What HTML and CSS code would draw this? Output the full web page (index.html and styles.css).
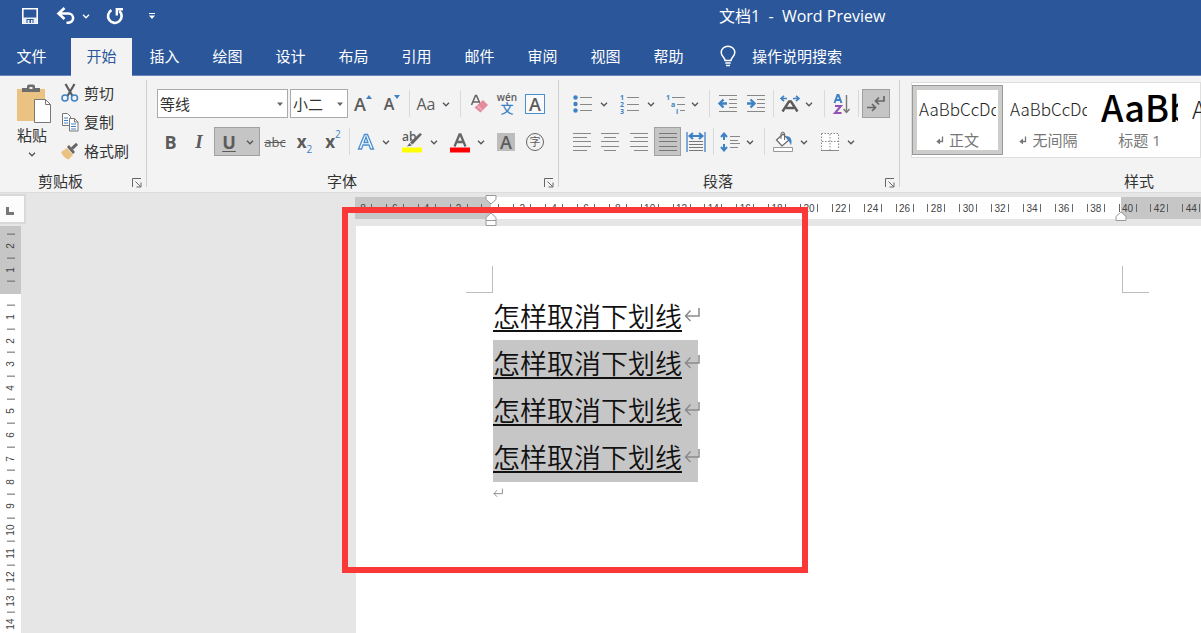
FILE: index.html
```html
<!DOCTYPE html>
<html lang="zh-CN">
<head>
<meta charset="utf-8">
<title>文档1 - Word Preview</title>
<link rel="stylesheet" href="styles.css">
</head>
<body>
<svg class="defs" aria-hidden="true">
  <symbol id="chev" viewBox="0 0 12 12"><path d="M3 4.800l3 3 3-3" fill="none" stroke="currentColor" stroke-width="1.300"/></symbol>
  <symbol id="caret" viewBox="0 0 12 12"><path d="M3 4.500h6L6 8z" fill="#666"/></symbol>
  <symbol id="launch" viewBox="0 0 10 10"><path d="M.5 9V.5H9M3.500 3.500l5 5M9 4.500V9H4.500" fill="none" stroke="#666"/></symbol>
  <symbol id="ret" viewBox="0 0 16 16"><path d="M15 1v8H1.500M6.500 3.500L1.500 9l5 5" fill="none" stroke="#8a8a8a" stroke-width="1.500"/></symbol>
  <symbol id="ret-fill" viewBox="0 0 8 8"><path d="M6.500 .5v5H3" fill="none" stroke="#777" stroke-width="1.300"/><path d="M4 2.500v6L.3 5.500z" fill="#777"/></symbol>
</svg>

<header class="titlebar">
  <div class="quick">
    <button aria-label="保存"><svg width="18" height="18" viewBox="0 0 18 18"><path d="M1.800 1.800h14.400v14.400H1.800z" fill="none" stroke="#fff" stroke-width="1.600"/><path d="M2 10.500h14v6H2z" fill="#e8eef8"/><path d="M5.500 12h7v4h-7z" fill="#2b579a"/><path d="M6.500 13h2v4h-2zM10 13h1.500v4H10z" fill="#e8eef8"/></svg></button>
    <button class="undo" aria-label="撤消"><svg width="20" height="18" viewBox="0 0 20 18"><path d="M2.500 6.500h10a4.600 4.600 0 0 1 0 9.200h-2M8.500 1L2.500 6.500l6 5.500" fill="none" stroke="#fff" stroke-width="2.600"/></svg><svg class="chev" width="12" height="12"><use href="#chev"/></svg></button>
    <button aria-label="重复"><svg width="18" height="18" viewBox="0 0 18 18"><path d="M5.500 3.200A6.800 6.800 0 1 0 13.300 4" fill="none" stroke="#fff" stroke-width="2.600"/><path d="M10.800 8.500V2.200H17" fill="none" stroke="#fff" stroke-width="2.400"/></svg></button>
    <button class="more" aria-label="自定义快速访问工具栏"><svg width="8" height="8" viewBox="0 0 8 8"><path d="M1 1.500h6" stroke="#fff"/><path d="M1 3.500h6L4 7z" fill="#fff"/></svg></button>
  </div>
  <h1>文档1 &nbsp;- &nbsp;Word Preview</h1>
</header>

<nav class="tabs">
  <button class="file">文件</button>
  <button class="active">开始</button>
  <button>插入</button>
  <button>绘图</button>
  <button>设计</button>
  <button>布局</button>
  <button>引用</button>
  <button>邮件</button>
  <button>审阅</button>
  <button>视图</button>
  <button>帮助</button>
  <button class="tell"><svg width="16" height="22" viewBox="0 0 16 22"><path d="M5 15.500c0-3-3.800-4.200-3.800-8a6.800 6.300 0 0 1 13.600 0c0 3.800-3.800 5-3.800 8zM5.300 18h5.400M6 20.500h4" fill="none" stroke="#fff" stroke-width="1.500"/></svg>操作说明搜索</button>
</nav>

<section class="ribbon">
  <div class="group clipboard">
    <div class="clip">
      <button class="paste">
        <svg width="36" height="40" viewBox="0 0 36 40"><path d="M3 5h28v32H3z" fill="#eac282"/><path d="M8 8V4h5V2.500a2 2 0 0 1 2-2h4a2 2 0 0 1 2 2V4h5v4z" fill="#6d6d6d"/><path d="M15.500 3h3v2h-3z" fill="#f3f3f3"/><path d="M20.500 15.500h11l5 5V38.500h-16z" fill="#fff" stroke="#777"/><path d="M31.500 15.500v5h5" fill="none" stroke="#777"/></svg>
        <span>粘贴</span>
        <svg class="chev" width="12" height="12"><use href="#chev"/></svg>
      </button>
      <div class="clip-list">
        <button><svg width="18" height="20" viewBox="0 0 18 20"><path d="M4.500 1l7 12M13.500 1l-7 12" stroke="#5b5b5b" stroke-width="2.200"/><circle cx="4" cy="15" r="3" fill="none" stroke="#3f82c4" stroke-width="1.500"/><circle cx="13.500" cy="15" r="3" fill="none" stroke="#3f82c4" stroke-width="1.500"/></svg>剪切</button>
        <button><svg width="18" height="20" viewBox="0 0 18 20"><path d="M1.500 1.500h5l3 3v9h-8z" fill="#fff" stroke="#777"/><path d="M3 6h4M3 8.500h4M3 11h4" stroke="#3f82c4"/><path d="M8.500 6.500h5l3.500 3.500v9H8.500z" fill="#fff" stroke="#777"/><path d="M13.500 6.500V10H17" fill="none" stroke="#777"/><path d="M10 12h5M10 14.500h5M10 17h5" stroke="#3f82c4"/></svg>复制</button>
        <button><svg width="18" height="20" viewBox="0 0 18 20"><path d="M0 11l6-4 6 7-4.500 4.500C4 17.500 1.500 14.500 0 11z" fill="#eac282"/><path d="M6 6l2-2 6 7-2 2z" fill="#666"/><path d="M10 6.500L15 1.800l2 2.200-5 4.800z" fill="#666"/></svg>格式刷</button>
      </div>
    </div>
    <footer><span>剪贴板</span><button class="launch" aria-label="剪贴板设置"><svg width="10" height="10"><use href="#launch"/></svg></button></footer>
  </div>

  <div class="group font">
    <div class="row font-a">
      <label class="pick"><select aria-label="字体"><option>等线</option></select><svg width="12" height="12"><use href="#caret"/></svg></label>
      <label class="pick"><select aria-label="字号"><option>小二</option></select><svg width="12" height="12"><use href="#caret"/></svg></label>
      <button class="grow" aria-label="增大字号"><span class="t18">A</span><svg width="6" height="18" viewBox="0 0 6 18"><path d="M0 4h6L3 0z" fill="#3f82c4"/></svg></button>
      <button class="grow" aria-label="减小字号"><span class="t16">A</span><svg width="6" height="18" viewBox="0 0 6 18"><path d="M0 0h6L3 4z" fill="#3f82c4"/></svg></button>
      <i class="sep"></i>
      <button class="split" aria-label="更改大小写"><span class="t16">Aa</span><svg class="chev" width="12" height="12"><use href="#chev"/></svg></button>
      <i class="sep"></i>
      <button aria-label="清除格式"><svg width="18" height="20" viewBox="0 0 18 20"><path d="M1.500 11L5.500 1.500h1L10 9.500M3 8h6" fill="none" stroke="#666" stroke-width="1.600"/><path d="M13 6l5 5-7.500 7.500-6-5z" fill="#e58b9d"/><path d="M7 11.500l5.500 5" stroke="#f6d0d7" stroke-width="1"/></svg></button>
      <button class="pinyin" aria-label="拼音指南"><span>wén</span><b>文</b></button>
      <button aria-label="字符边框"><span class="boxed">A</span></button>
    </div>
    <div class="row font-b">
      <button class="heavy">B</button>
      <button class="ital">I</button>
      <button class="split on heavy" aria-label="下划线"><span class="under">U</span><svg class="chev" width="12" height="12"><use href="#chev"/></svg></button>
      <button class="strike">abc</button>
      <button class="script">x<sub>2</sub></button>
      <button class="script">x<sup>2</sup></button>
      <i class="sep"></i>
      <button class="split" aria-label="文本效果"><svg width="18" height="20" viewBox="0 0 18 20"><path d="M1.500 17L7.500 2.500h3l6 14.500h-3l-1.500-4H6l-1.500 4zM7 10.500h4L9 5z" fill="#f8fbff" stroke="#4a90d0" stroke-width="1.300"/></svg><svg class="chev" width="12" height="12"><use href="#chev"/></svg></button>
      <button class="split" aria-label="突出显示"><svg width="20" height="22" viewBox="0 0 20 22"><text x="0" y="10" class="ink-label">ab</text><path d="M20 3.500L10.500 13.500l-2.500-2L18 2z" fill="#666"/><path d="M7.500 12l2.500 2.500-5 1z" fill="#666"/><path d="M0 16.500h20v5H0z" fill="#ff0"/></svg><svg class="chev" width="12" height="12"><use href="#chev"/></svg></button>
      <button class="split" aria-label="字体颜色"><svg width="20" height="22" viewBox="0 0 20 22"><path d="M4.500 15.500L9.500 3.500h1l5 12M6.500 11h7" fill="none" stroke="#666" stroke-width="2.300"/><path d="M0 16.500h20v5H0z" fill="#f00"/></svg><svg class="chev" width="12" height="12"><use href="#chev"/></svg></button>
      <button aria-label="字符底纹"><span class="shaded">A</span></button>
      <button aria-label="带圈字符"><span class="ringed">字</span></button>
    </div>
    <footer><span>字体</span><button class="launch" aria-label="字体设置"><svg width="10" height="10"><use href="#launch"/></svg></button></footer>
  </div>

  <div class="group para">
    <div class="row para-a">
      <button class="split" aria-label="项目符号"><svg width="20" height="20" viewBox="0 0 20 20"><path d="M7 3.500h12M7 10.500h12M7 16.500h12" stroke="#888"/><g fill="#3f82c4"><circle cx="2.500" cy="3.500" r="2.200"/><circle cx="2.500" cy="10" r="2.200"/><circle cx="2.500" cy="16.500" r="2.200"/></g></svg><svg class="chev" width="12" height="12"><use href="#chev"/></svg></button>
      <button class="split" aria-label="编号"><svg width="20" height="20" viewBox="0 0 20 20"><path d="M7 3.500h12M7 10.500h12M7 16.500h12" stroke="#888"/><g class="mini"><text x="0" y="6">1</text><text x="0" y="13">2</text><text x="0" y="20">3</text></g></svg><svg class="chev" width="12" height="12"><use href="#chev"/></svg></button>
      <button class="split" aria-label="多级列表"><svg width="20" height="20" viewBox="0 0 20 20"><path d="M7 3.500h13M12 10.500h8M15 16.500h5" stroke="#888"/><g class="mini"><text x="1" y="6">1</text><text x="6" y="13">a</text><text x="11" y="20">i</text></g></svg><svg class="chev" width="12" height="12"><use href="#chev"/></svg></button>
      <i class="sep"></i>
      <button aria-label="减少缩进"><svg width="20" height="20" viewBox="0 0 20 20"><path d="M1 1.500h18M11 5.500h8M11 9.500h8M11 13.500h8M1 17.500h18" stroke="#888"/><path d="M2 9.500h7M5.500 5.500l-4 4 4 4" fill="none" stroke="#3f82c4" stroke-width="2.400"/></svg></button>
      <button aria-label="增加缩进"><svg width="20" height="20" viewBox="0 0 20 20"><path d="M1 1.500h18M11 5.500h8M11 9.500h8M11 13.500h8M1 17.500h18" stroke="#888"/><path d="M1 9.500h7M4.500 5.500l4 4-4 4" fill="none" stroke="#3f82c4" stroke-width="2.400"/></svg></button>
      <i class="sep"></i>
      <button class="split" aria-label="中文版式"><svg width="20" height="18" viewBox="0 0 20 18"><path d="M2.500 16.500L9 6.500h2l6.500 10M6 13h8" fill="none" stroke="#5b5b5b" stroke-width="2.400"/><path d="M1 3.500h6M4 .8L1 3.500l3 2.700M19 3.500h-6M16 .8l3 2.700-3 2.700" fill="none" stroke="#3f82c4" stroke-width="1.600"/></svg><svg class="chev" width="12" height="12"><use href="#chev"/></svg></button>
      <i class="sep"></i>
      <button aria-label="排序"><svg width="18" height="22" viewBox="0 0 18 22"><path d="M1.500 10L4.500 2h1l3 8M3 7h4.500" fill="none" stroke="#3f82c4" stroke-width="2"/><path d="M2 13h6l-6 7h6.500" fill="none" stroke="#9350b8" stroke-width="2"/><path d="M13.500 2v17M10.500 16l3 3.500 3-3.500" fill="none" stroke="#777" stroke-width="1.400"/></svg></button>
      <i class="sep"></i>
      <button class="on" aria-label="显示编辑标记"><svg width="18" height="18" viewBox="0 0 18 18"><path d="M17 1v5H9M12 2.500L8.500 6l3.500 3.500M0 12.500h8M5 9L8.500 12.500 5 16" fill="none" stroke="#666" stroke-width="1.700"/></svg></button>
    </div>
    <div class="row para-b">
      <button aria-label="左对齐"><svg width="18" height="20" viewBox="0 0 18 20"><path d="M0 1.500h18M0 5.500h14M0 9.500h18M0 14.500h18M0 18.500h14" stroke="#888"/></svg></button>
      <button aria-label="居中"><svg width="18" height="20" viewBox="0 0 18 20"><path d="M0 1.500h18M3 5.500h12M0 9.500h18M0 14.500h18M3 18.500h12" stroke="#888"/></svg></button>
      <button aria-label="右对齐"><svg width="18" height="20" viewBox="0 0 18 20"><path d="M0 1.500h18M4 5.500h14M0 9.500h18M0 14.500h18M4 18.500h14" stroke="#888"/></svg></button>
      <button class="on" aria-label="两端对齐"><svg width="18" height="20" viewBox="0 0 18 20"><path d="M0 1.500h18M0 5.500h18M0 9.500h18M0 14.500h18M0 18.500h18" stroke="#777"/></svg></button>
      <button aria-label="分散对齐"><svg width="20" height="20" viewBox="0 0 20 20"><path d="M1 0v20M19 0v20" stroke="#3f82c4" stroke-width="1.300"/><path d="M3.500 4h13M7 1L3.500 4 7 7M13 1l3.500 3L13 7" fill="none" stroke="#3f82c4" stroke-width="2"/><path d="M3 9.500h14M3 12.500h14M3 15.500h14M3 18.500h14" stroke="#777"/></svg></button>
      <i class="sep"></i>
      <button class="split" aria-label="行距"><svg width="20" height="20" viewBox="0 0 20 20"><path d="M4 2v6M1 5l3-3.500L7 5M4 12v6M1 15l3 3.500L7 15" fill="none" stroke="#3f82c4" stroke-width="2"/><path d="M10 4.500h10M10 8.500h8M10 11.500h10M10 15.500h8" stroke="#888"/></svg><svg class="chev" width="12" height="12"><use href="#chev"/></svg></button>
      <i class="sep"></i>
      <button class="split" aria-label="底纹"><svg width="20" height="20" viewBox="0 0 20 20"><path d="M.5 15.500h19v4H.5z" fill="#fff" stroke="#999"/><path d="M3.500 8L10 2l6 6-7 6z" fill="#fff" stroke="#666" stroke-width="1.200"/><path d="M8 7V2a1.800 1.800 0 0 1 3.600 0v6" fill="none" stroke="#666"/><path d="M13 4c5 0 6.500 4 5 9.500-1-2.500-1.500-4-3-5z" fill="#3f82c4"/></svg><svg class="chev" width="12" height="12"><use href="#chev"/></svg></button>
      <button class="split" aria-label="边框"><svg width="18" height="20" viewBox="0 0 18 20"><path d="M0 1h18v18H0z" fill="#fff"/><path d="M.5 1.500h17v16M.5 1.500v16M9 2v16M1 9.500h16" fill="none" stroke="#888" stroke-dasharray="1.500 1.500"/><path d="M0 18.500h18" stroke="#888"/></svg><svg class="chev" width="12" height="12"><use href="#chev"/></svg></button>
    </div>
    <footer><span>段落</span><button class="launch" aria-label="段落设置"><svg width="10" height="10"><use href="#launch"/></svg></button></footer>
  </div>

  <div class="group styles">
    <div class="gallery">
      <button class="style chosen"><span class="sample">AaBbCcDd</span><span class="name"><svg width="8" height="8"><use href="#ret-fill"/></svg>正文</span></button>
      <button class="style"><span class="sample">AaBbCcDd</span><span class="name"><svg width="8" height="8"><use href="#ret-fill"/></svg>无间隔</span></button>
      <button class="style"><span class="sample big">AaBb</span><span class="name">标题 1</span></button>
      <button class="style"><span class="sample mid">AaBb</span><span class="name">标题 2</span></button>
    </div>
    <footer><span>样式</span></footer>
  </div>
</section>

<main class="work">
  <button class="corner" aria-label="制表符"><svg width="8" height="8" viewBox="0 0 8 8"><path d="M1.500 0v6.500H8" fill="none" stroke="#777" stroke-width="3"/></svg></button>
  <div class="hruler">
    <div class="marks"><span><i>8</i></span><span><i>6</i></span><span><i>4</i></span><span><i>2</i></span><span><i></i></span><span><i>2</i></span><span><i>4</i></span><span><i>6</i></span><span><i>8</i></span><span><i>10</i></span><span><i>12</i></span><span><i>14</i></span><span><i>16</i></span><span><i>18</i></span><span><i>20</i></span><span><i>22</i></span><span><i>24</i></span><span><i>26</i></span><span><i>28</i></span><span><i>30</i></span><span><i>32</i></span><span><i>34</i></span><span><i>36</i></span><span><i>38</i></span><span><i>40</i></span><span><i>42</i></span><span><i>44</i></span></div>
  </div>
  <div class="vruler">
    <div class="vmarks"><span>2</span><span>1</span><span></span><span>1</span><span>2</span><span>3</span><span>4</span><span>5</span><span>6</span><span>7</span><span>8</span><span>9</span><span>10</span><span>11</span><span>12</span><span>13</span><span>14</span></div>
  </div>
  <article class="page">
    <div class="crops"><i class="crop-l"></i><i class="crop-r"></i></div>
    <div class="text">
      <p><u>怎样取消下划线</u><svg width="16" height="16"><use href="#ret"/></svg></p>
      <div class="selected">
        <p><u>怎样取消下划线</u><svg width="16" height="16"><use href="#ret"/></svg></p>
        <p><u>怎样取消下划线</u><svg width="16" height="16"><use href="#ret"/></svg></p>
        <p><u>怎样取消下划线</u><svg width="16" height="16"><use href="#ret"/></svg></p>
      </div>
      <p class="empty"><svg width="10" height="10"><use href="#ret"/></svg></p>
    </div>
  </article>
  <div class="frame"></div>
  <svg class="knob first" width="12" height="10" viewBox="0 0 12 10"><path d="M1 .5h10v4L6 9 1 4.500z" fill="#fff" stroke="#999"/></svg>
  <svg class="knob hang" width="12" height="14" viewBox="0 0 12 14"><path d="M1 13.500v-8L6 1l5 4.500v8zM1 8.500h10" fill="#fff" stroke="#999"/></svg>
  <svg class="knob right" width="12" height="10" viewBox="0 0 12 10"><path d="M1 9.500v-4L6 1l5 4.500v4z" fill="#fff" stroke="#999"/></svg>
</main>
</body>
</html>
```
FILE: styles.css
```css
* { box-sizing: border-box; }
body {
  margin: 0;
  height: 100vh;
  display: flex;
  flex-direction: column;
  overflow: hidden;
  background: #e6e6e6;
  color: #333;
  font: 15px/20px "Open Sans", "Noto Sans CJK SC", sans-serif;
}
button {
  margin: 0;
  padding: 0;
  border: 0;
  background: none;
  color: inherit;
  font: inherit;
}
svg { display: block; flex: none; overflow: visible; }
p, h1 { margin: 0; }
.defs { position: absolute; width: 0; height: 0; }

.titlebar {
  display: grid;
  grid-template-columns: 719px 1fr;
  align-items: center;
  height: 31px;
  background: #2b579a;
  color: #fff;
}
.titlebar h1 { font-size: 16px; font-weight: 400; white-space: nowrap; }
.quick { display: flex; align-items: center; gap: 14px; padding-left: 21px; }
.undo { display: flex; align-items: center; gap: 4px; }
.quick .undo { margin-left: 3px; }
.quick .chev { color: #fff; }
.more { margin-left: 10px; }

.tabs {
  display: flex;
  gap: 2px;
  height: 45px;
  padding-left: 1px;
  background: #2b579a;
  color: #fff;
  border-bottom: 1px solid #6a86bf;
}
.tabs button { width: 61px; height: 38px; margin-top: 7px; padding-bottom: 2px; white-space: nowrap; }
.tabs .file { margin-right: 7px; }
.tabs .active { background: #f3f3f3; color: #2b579a; }
.tabs .tell { display: flex; align-items: center; gap: 16px; width: auto; margin-left: 19px; }

.ribbon {
  display: flex;
  height: 117px;
  background: #f3f3f3;
  border-bottom: 1px solid #dcdcdc;
}
.group {
  display: flex;
  flex-direction: column;
  flex: none;
  position: relative;
}
.group:not(.styles)::after {
  content: "";
  position: absolute;
  right: 0;
  top: 4px;
  bottom: 5px;
  width: 1px;
  background: #cfcfcf;
}
.group footer {
  display: flex;
  align-items: center;
  justify-content: center;
  height: 20px;
  margin: auto 0 1px;
}
.launch { position: absolute; right: 5px; bottom: 4px; }
.chev { color: #555; }

.clipboard { width: 147px; }
.clipboard footer { padding-right: 26px; }
.clip { display: flex; padding: 3px 0 0 14px; }
.paste { display: flex; flex-direction: column; align-items: center; width: 36px; margin: 5px 0 0; }
.paste span { margin-top: 1px; }
.paste .chev { margin-top: 3px; }
.clip-list { display: flex; flex-direction: column; gap: 9px; padding: 4px 0 0 11px; }
.clip-list button { display: flex; align-items: center; gap: 5px; }

.font { width: 412px; padding: 13px 0 0 10px; }
.para { width: 341px; padding: 13px 0 0 9px; }
.font footer { padding-right: 32px; }
.para footer { padding-right: 32px; }
.row { display: grid; align-items: center; height: 29px; margin-bottom: 9px; }
.font-a { grid-template-columns: 133px 58px 30px 28px 6px 44px 8px 29px 28px 28px; }
.font-b { grid-template-columns: 27px 30px 46px 30px 29px 28px 5px 44px 48px 47px 30px 28px; }
.para-a { grid-template-columns: 46px 47px 44px 9px 27px 29px 7px 42px 10px 26px 7px 28px; }
.para-b { grid-template-columns: 27px 29px 30px 27px 29px 6px 44px 8px 46px 47px; }
.row button {
  display: flex;
  align-items: center;
  justify-content: center;
  height: 29px;
  color: #5b5b5b;
}
.row .split { display: grid; grid-template-columns: 1fr 12px; justify-items: center; padding-right: 4px; }
.row .on { background: #c5c5c5; box-shadow: inset 0 0 0 1px #a0a0a0; }
.sep { width: 1px; height: 27px; justify-self: center; background: #d9d9d9; }
.pick { display: grid; align-items: center; }
.font-a .pick:first-child { margin-right: 2px; }
.pick select, .pick svg { grid-area: 1 / 1; }
.pick svg { justify-self: end; margin-right: 2px; }
.pick select {
  appearance: none;
  width: 100%;
  height: 29px;
  padding: 0 2px;
  border: 1px solid #ababab;
  border-radius: 0;
  background: #fff;
  color: #333;
  font: inherit;
}
.t18 { font-size: 18px; font-weight: 600; }
.t16 { font-size: 16px; font-weight: 600; }
.row .split .t16 { font-weight: 400; }
.row .pinyin { flex-direction: column; font-size: 10px; font-weight: 600; line-height: 10px; }
.pinyin b { color: #3f82c4; font-size: 13px; font-weight: 500; line-height: 13px; }
.boxed, .shaded { width: 20px; font-size: 18px; font-weight: 600; line-height: 18px; text-align: center; }
.boxed { border: 1px solid #4a90d0; background: #fafafa; }
.shaded { width: 18px; background: #bdbdbd; }
.ringed { width: 18px; border: 1px solid #666; border-radius: 50%; font-size: 11px; line-height: 16px; text-align: center; }
.row .heavy { font-size: 18px; font-weight: 700; }
.under { line-height: 18px; text-decoration: underline; text-decoration-thickness: 1px; text-underline-offset: 2px; }
.row .ital { font: italic 700 19px "Liberation Serif", serif; }
.row .strike { font-size: 13px; text-decoration: line-through; }
.row .script { font-size: 17px; font-weight: 700; }
.script sub, .script sup { color: #3f82c4; font-size: 10px; font-weight: 400; line-height: 10px; }
.script sub { align-self: flex-end; margin-bottom: 2px; }
.script sup { align-self: flex-start; margin-top: 2px; }
.ink-label { font: 600 12px "Open Sans", sans-serif; fill: #5b5b5b; }
.mini { font: 700 7px/7px "Open Sans", sans-serif; fill: #3f82c4; }

.styles { flex: 1; min-width: 0; padding: 6px 0 0 11px; overflow: hidden; }
.styles footer { width: 312px; padding-left: 144px; }
.gallery { display: flex; height: 76px; padding: 2px 0; background: #fff; border: 1px solid #dedede; }
.style {
  flex: none;
  display: flex;
  flex-direction: column;
  width: 91px;
  padding: 2px 7px;
  color: #777;
}
.chosen { box-shadow: inset 0 0 0 1px #999, inset 0 0 0 5px #cdcdcb; }
.sample {
  width: 100%;
  height: 43px;
  overflow: hidden;
  color: #222;
  font: 300 17px/43px "Noto Sans CJK SC", sans-serif;
  text-align: left;
}
.big { color: #000; font-weight: 500; font-size: 36px; line-height: 38px; }
.mid { font-size: 24px; }
.name { display: flex; align-items: center; justify-content: center; gap: 5px; width: 100%; }

.work {
  position: relative;
  flex: 1;
  min-height: 0;
  display: grid;
  grid-template-columns: 24px 1fr;
  grid-template-rows: 33px 1fr;
  overflow: hidden;
}
.corner {
  display: flex;
  align-items: center;
  justify-content: center;
  height: 26px;
  margin-top: 3px;
  padding: 3px 4px 0 0;
  background: #fcfcfc;
  box-shadow: 0 0 0 2px #d8d8d8;
}
.hruler {
  height: 22px;
  margin: 4px 0 0 331px;
  overflow: hidden;
  background: linear-gradient(90deg, #c6c6c6 136px, #fff 136px 766px, #c6c6c6 766px);
}
.marks { display: flex; width: 860px; height: 22px; margin-left: -8px; }
.marks span { flex: 1; display: grid; place-items: center; }
.marks i {
  width: 18px;
  height: 8px;
  border: solid #666;
  border-width: 0 1px;
  color: #444;
  font: 10px/9px "Liberation Sans", sans-serif;
  text-align: center;
}
.vruler {
  width: 21px;
  overflow: hidden;
  background: linear-gradient(#c6c6c6 68px, #fff 68px);
}
.vmarks { display: flex; flex-direction: column; height: 402px; margin-top: 8px; padding: 0 6px 0 7px; }
.vmarks span {
  flex: 1;
  border-bottom: 1px solid #666;
  writing-mode: vertical-rl;
  transform: rotate(180deg);
  color: #444;
  font: 10px/8px "Liberation Sans", sans-serif;
  text-align: center;
}
.page { margin-left: 332px; padding-top: 40px; background: #fff; overflow: hidden; }
.crops { display: flex; gap: 629px; padding-left: 110px; }
.crops i { flex: none; width: 27px; height: 27px; border: solid #bdbdbd; border-width: 0 1px 1px 0; }
.crops .crop-r { border-width: 0 0 1px 1px; }
.text { padding-left: 137px; color: #111; font: 350 27px/45px "Noto Sans CJK SC", sans-serif; }
.text p { display: flex; height: 47px; white-space: nowrap; }
.text svg { margin: 14px 0 0 2px; }
.text u { text-decoration-thickness: 2px; text-underline-offset: 3px; }
.selected { width: 205px; padding-bottom: 1px; background: #c6c6c6; }
.text .empty { height: 22px; }
.text .empty svg { margin: 6px 0 0; }
.frame { position: absolute; left: 342px; top: 14px; width: 466px; height: 366px; border: 6px solid #fa3838; }
.knob { position: absolute; left: 485px; }
.first { top: 2px; }
.hang { top: 19px; }
.knob.right { left: 1115px; top: 18px; }
```
